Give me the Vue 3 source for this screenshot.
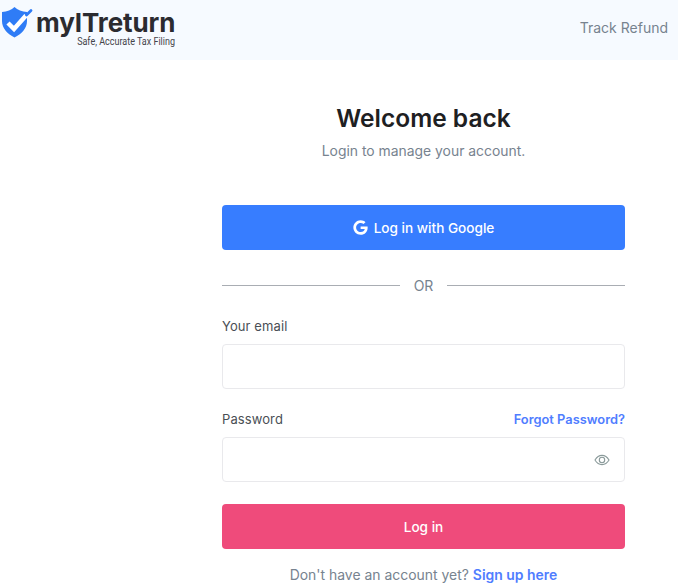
<script setup>
import { ref } from 'vue'
const email = ref('')
const password = ref('')
</script>

<template>
  <div class="page">
    <header class="topbar">
      <div class="logo">
        <svg class="shield" width="32" height="31" viewBox="0 0 32 31">
          <path d="M12.5 0 C9.5 2.8 5 4.6 0 5 L0 14 C0 21.5 5.5 27 12.5 30.5 C19.5 27 25 21.5 25 14 L25 5 C20 4.6 15.5 2.8 12.5 0 Z" fill="#2f7cf6" />
          <path d="M6 16 L12 22 L24 8.5" fill="none" stroke="#fff" stroke-width="4.5" />
          <path d="M24.5 8 L29 3.5" fill="none" stroke="#2f7cf6" stroke-width="2.8" stroke-linecap="round" />
        </svg>
        <div class="brand">
          <div class="brand-name">myITreturn</div>
          <div class="brand-sub">Safe, Accurate Tax Filing</div>
        </div>
      </div>
      <a class="track">Track Refund</a>
    </header>

    <main class="content">
      <h1>Welcome back</h1>
      <p class="lead">Login to manage your account.</p>

      <button class="btn google">
        <svg width="15" height="15" viewBox="0 0 488 512" fill="#fff">
          <path d="M488 261.8C488 403.3 391.1 504 248 504 110.8 504 0 393.2 0 256S110.8 8 248 8c66.8 0 123 24.5 166.3 64.9l-67.5 64.9C258.5 52.6 94.3 116.6 94.3 256c0 86.5 69.1 156.6 153.7 156.6 98.2 0 135-70.4 140.8-106.9H248v-85.3h236.1c2.3 12.7 3.9 24.9 3.9 41.4z" />
        </svg>
        Log in with Google
      </button>

      <div class="divider"><span>OR</span></div>

      <label class="label">Your email</label>
      <input v-model="email" class="field" type="text" />

      <div class="label-row">
        <label class="label">Password</label>
        <a class="forgot">Forgot Password?</a>
      </div>
      <div class="pw">
        <input v-model="password" class="field" type="password" />
        <svg class="eye" width="16" height="16" viewBox="0 0 16 16" fill="none" stroke="#8a9a9a" stroke-width="1.1">
          <path d="M1 8 C3 4.6 5.4 3.4 8 3.4 C10.6 3.4 13 4.6 15 8 C13 11.4 10.6 12.6 8 12.6 C5.4 12.6 3 11.4 1 8 Z" />
          <circle cx="8" cy="8" r="2.7" />
        </svg>
      </div>

      <button class="btn login">Log in</button>

      <p class="signup">Don't have an account yet? <a>Sign up here</a></p>
    </main>
  </div>
</template>

<style>
html, body {
  margin: 0;
  background: #fff;
}
</style>

<style scoped>
.page {
  font-family: Inter, "Liberation Sans", sans-serif;
  height: 586px;
  overflow: hidden;
}
.topbar {
  height: 60px;
  background: #f6faff;
  display: flex;
  justify-content: space-between;
  padding: 0 10px 0 2px;
}
.logo {
  display: flex;
  align-items: flex-start;
  gap: 2px;
  padding-top: 7px;
}
.brand {
  width: 140px;
}
.brand-name {
  font-size: 26px;
  line-height: 31px;
  font-weight: 700;
  letter-spacing: -0.1px;
  color: #2b2b30;
  white-space: nowrap;
}
.brand-sub {
  font-family: Roboto, sans-serif;
  font-size: 10px;
  line-height: 12px;
  color: #44444a;
  text-align: right;
  white-space: nowrap;
  transform: scaleX(0.9);
  transform-origin: right;
  margin: -2px 1px 0 0;
}
.track {
  font-size: 14px;
  color: #77838f;
  margin-top: 19px;
}
.content {
  width: 403px;
  margin-left: 222px;
  display: flex;
  flex-direction: column;
}
h1 {
  margin: 41px 0 0;
  font-size: 24.5px;
  line-height: 34px;
  font-weight: 600;
  color: #1e2022;
  text-align: center;
}
.lead {
  margin: 6px 0 0;
  font-size: 13.9px;
  line-height: 21px;
  color: #77838f;
  text-align: center;
}
.btn {
  display: flex;
  align-items: center;
  justify-content: center;
  gap: 6px;
  height: 45px;
  border: none;
  border-radius: 4px;
  color: #fff;
  font-family: inherit;
  font-size: 13.6px;
  font-weight: 500;
}
.google {
  margin-top: 43px;
  background: #377dff;
}
.divider {
  display: flex;
  align-items: center;
  gap: 14px;
  margin-top: 25px;
  font-size: 14px;
  line-height: 20px;
  color: #77838f;
}
.divider span {
  position: relative;
  top: 1px;
}
.divider::before,
.divider::after {
  content: "";
  flex: 1;
  height: 1px;
  background: #a9adb3;
}
.label {
  font-size: 13px;
  line-height: 20px;
  color: #4a4f55;
  letter-spacing: 0.1px;
}
.content > .label {
  margin-top: 21px;
}
.field {
  display: block;
  width: 100%;
  height: 45px;
  box-sizing: border-box;
  border: 1px solid #e9e9ec;
  border-radius: 4px;
  background: #fff;
  outline: none;
  margin-top: 8px;
}
.label-row {
  display: flex;
  justify-content: space-between;
  align-items: flex-start;
  margin-top: 20px;
}
.forgot {
  font-size: 12.85px;
  line-height: 22px;
  font-weight: 600;
  color: #4f7dff;
}
.pw {
  position: relative;
}
.pw .field {
  margin-top: 6px;
}
.eye {
  position: absolute;
  right: 15px;
  top: 21px;
}
.login {
  margin-top: 22px;
  background: #ef4b7b;
}
.signup {
  margin: 15px 0 0;
  font-size: 13.95px;
  line-height: 21px;
  color: #77838f;
  text-align: center;
}
.signup a {
  color: #4f7dff;
  font-weight: 600;
}
</style>
